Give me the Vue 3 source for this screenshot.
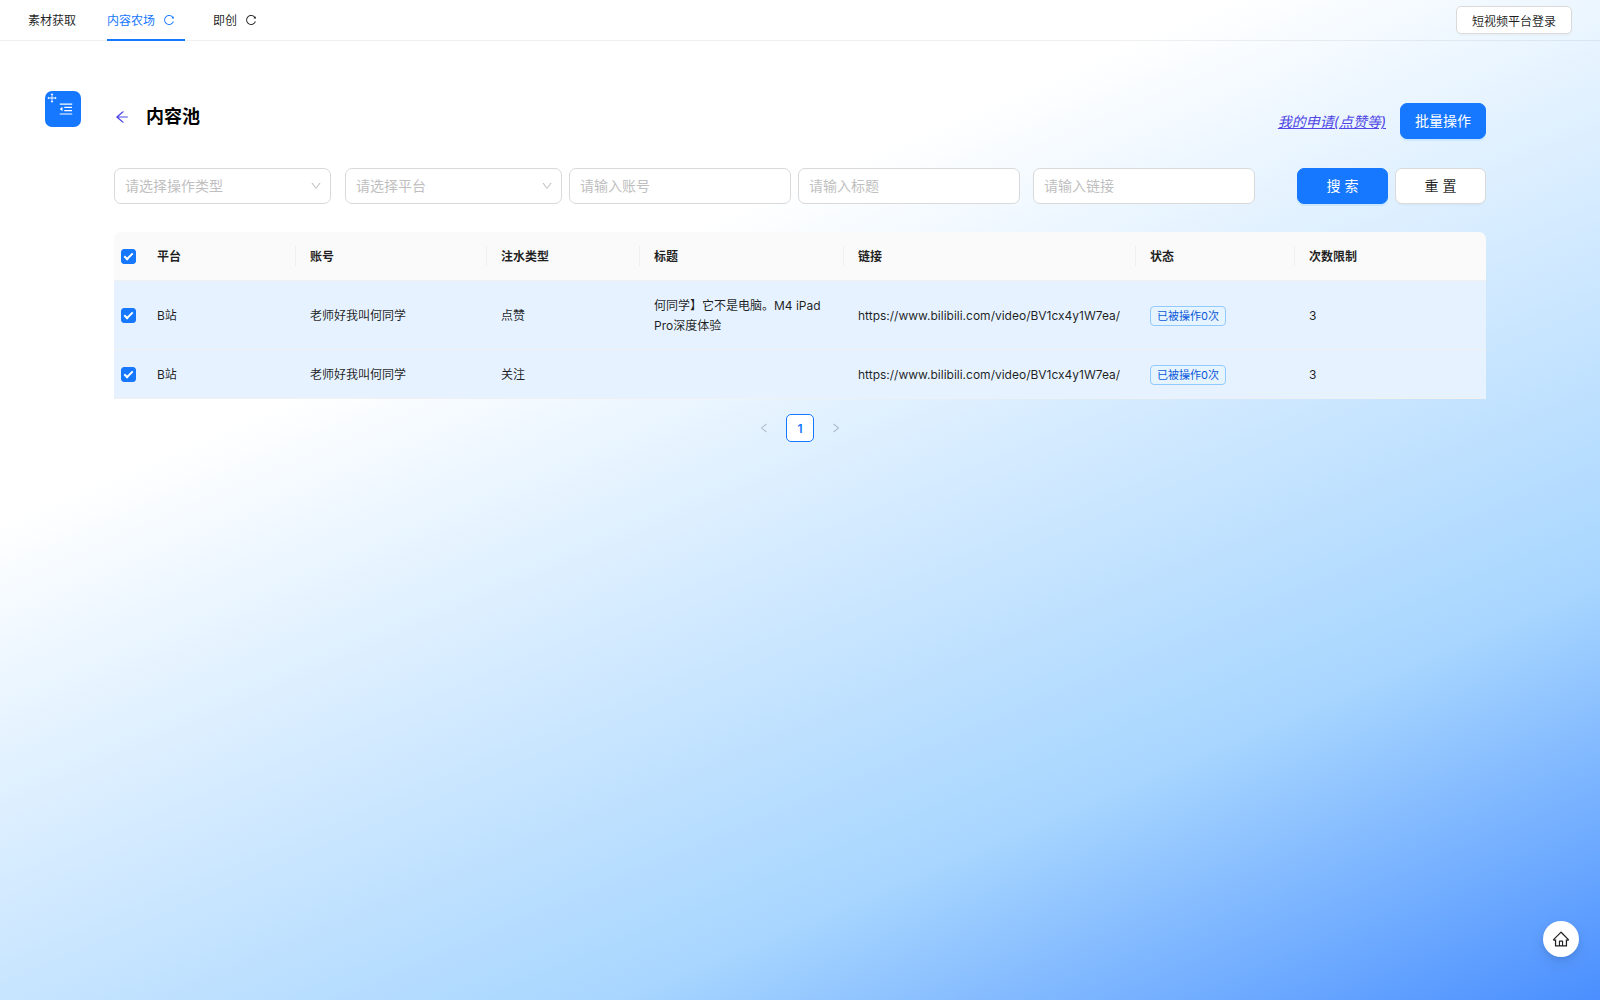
<script setup>
import { computed, ref } from 'vue'

const icons = {
  reload:
    'M909.1 209.3l-56.4 44.1C775.8 155.1 656.2 92 521.9 92 290 92 102.3 279.5 102 511.5 101.7 743.7 289.8 932 521.9 932c181.3 0 335.8-115 394.6-276.1 1.5-4.2-.7-8.9-4.9-10.3l-56.7-19.5a8 8 0 00-10.1 4.8c-1.8 5-3.8 10-5.9 14.9-17.3 41-42.1 77.8-73.7 109.4A344.77 344.77 0 01655.9 829c-42.3 17.9-87.4 27-133.8 27-46.5 0-91.5-9.1-133.8-27A341.5 341.5 0 01279 755.2a342.16 342.16 0 01-73.7-109.4c-17.9-42.4-27-87.4-27-133.9s9.1-91.5 27-133.9c17.3-41 42.1-77.8 73.7-109.4 31.6-31.6 68.4-56.4 109.3-73.8 42.3-17.9 87.4-27 133.8-27 46.5 0 91.5 9.1 133.8 27a341.5 341.5 0 01109.3 73.8c9.9 9.9 19.2 20.4 27.8 31.4l-60.2 47a8 8 0 003 14.1l175.6 43c5 1.2 9.9-2.6 9.9-7.7l.8-180.9c-.1-6.6-7.8-10.3-13-6.2z',
  menuFold:
    'M408 442h480c4.4 0 8-3.6 8-8v-56c0-4.4-3.6-8-8-8H408c-4.4 0-8 3.6-8 8v56c0 4.4 3.6 8 8 8zm-8 204c0 4.4 3.6 8 8 8h480c4.4 0 8-3.6 8-8v-56c0-4.4-3.6-8-8-8H408c-4.4 0-8 3.6-8 8v56zm504-486H120c-4.4 0-8 3.6-8 8v56c0 4.4 3.6 8 8 8h784c4.4 0 8-3.6 8-8v-56c0-4.4-3.6-8-8-8zm0 632H120c-4.4 0-8 3.6-8 8v56c0 4.4 3.6 8 8 8h784c4.4 0 8-3.6 8-8v-56c0-4.4-3.6-8-8-8zM115.4 518.9L271.7 642c5.8 4.6 14.4.5 14.4-6.9V388.9c0-7.4-8.5-11.5-14.4-6.9L115.4 505.1a8.74 8.74 0 000 13.8z',
  drag:
    'M909.3 506.3L781.7 405.6a7.23 7.23 0 00-11.7 5.7V476H548V254h64.8c6 0 9.4-7 5.7-11.7L517.7 114.7a7.14 7.14 0 00-11.3 0L405.6 242.3a7.23 7.23 0 005.7 11.7H476v222H254v-64.8c0-6-7-9.4-11.7-5.7L114.7 506.3a7.14 7.14 0 000 11.3l127.5 100.8c4.7 3.7 11.7.4 11.7-5.7V548h222v222h-64.8c-6 0-9.4 7-5.7 11.7l100.8 127.5c2.9 3.7 8.5 3.7 11.3 0l100.8-127.5c3.7-4.7.4-11.7-5.7-11.7H548V548h222v64.8c0 6 7 9.4 11.7 5.7l127.5-100.8a7.3 7.3 0 00.1-11.4z',
  arrowLeft:
    'M872 474H286.9l350.2-304c5.6-4.9 2.2-14-5.2-14h-88.5c-3.9 0-7.6 1.4-10.5 3.9L155 487.8a31.96 31.96 0 000 48.3L535.1 866c1.5 1.3 3.3 2 5.2 2h91.5c7.4 0 10.8-9.2 5.2-14L286.9 550H872c4.4 0 8-3.6 8-8v-60c0-4.4-3.6-8-8-8z',
  down:
    'M884 256h-75c-5.1 0-9.9 2.5-12.9 6.6L512 654.2 227.9 262.6c-3-4.1-7.8-6.6-12.9-6.6h-75c-6.5 0-10.3 7.4-6.5 12.7l352.6 486.1c12.8 17.6 39 17.6 51.7 0l352.6-486.1c3.9-5.3.1-12.7-6.4-12.7z',
  left:
    'M724 218.3V141c0-6.7-7.7-10.4-12.9-6.3L260.3 486.8a31.86 31.86 0 000 50.3l450.8 352.1c5.3 4.1 12.9.4 12.9-6.3v-77.3c0-4.9-2.3-9.6-6.1-12.6l-360-281 360-281.1c3.8-3 6.1-7.7 6.1-12.6z',
  right:
    'M765.7 486.8L314.9 134.7A7.97 7.97 0 00302 141v77.3c0 4.9 2.3 9.6 6.1 12.6l360 281.1-360 281.1c-3.9 3-6.1 7.7-6.1 12.6V883c0 6.7 7.7 10.4 12.9 6.3l450.8-352.1a31.96 31.96 0 000-50.4z',
  home:
    'M946.5 505L560.1 118.8l-25.9-25.9a31.5 31.5 0 00-44.4 0L77.5 505a63.9 63.9 0 00-18.8 46c.4 35.2 29.7 63.3 64.9 63.3h42.5V940h691.8V614.3h43.4c17.1 0 33.2-6.7 45.3-18.8a63.6 63.6 0 0018.7-45.3c0-17-6.7-33.1-18.8-45.2zM568 868H456V664h112v204zm217.9-325.7V868H632V640c0-22.1-17.9-40-40-40H432c-22.1 0-40 17.9-40 40v228H238.1V542.3h-96l370-369.7 23.1 23.1L882 542.3h-96.1z'
}

const tabs = [
  { label: '素材获取', reload: false },
  { label: '内容农场', reload: true },
  { label: '即创', reload: true }
]
const activeTab = ref('内容农场')

const columns = [
  { title: '平台', width: 153 },
  { title: '账号', width: 191 },
  { title: '注水类型', width: 153 },
  { title: '标题', width: 204 },
  { title: '链接', width: 292 },
  { title: '状态', width: 159 },
  { title: '次数限制', width: 191 }
]
const checkColumn = 29
const totalWidth = checkColumn + columns.reduce((sum, c) => sum + c.width, 0)
const share = (width) => ({ width: `${(width / totalWidth) * 100}%` })

const rows = ref([
  {
    id: 1,
    checked: true,
    platform: 'B站',
    account: '老师好我叫何同学',
    type: '点赞',
    title: '何同学】它不是电脑。M4 iPad Pro深度体验',
    link: 'https://www.bilibili.com/video/BV1cx4y1W7ea/',
    status: '已被操作0次',
    limit: 3
  },
  {
    id: 2,
    checked: true,
    platform: 'B站',
    account: '老师好我叫何同学',
    type: '关注',
    title: '',
    link: 'https://www.bilibili.com/video/BV1cx4y1W7ea/',
    status: '已被操作0次',
    limit: 3
  }
])

const allChecked = computed({
  get: () => rows.value.every((row) => row.checked),
  set: (value) => rows.value.forEach((row) => (row.checked = value))
})

const blank = () => ({ operation: '', platform: '', account: '', title: '', link: '' })
const filters = ref(blank())
const reset = () => (filters.value = blank())
</script>

<template>
  <div class="page">
    <header class="topbar">
      <nav class="tabs">
        <a
          v-for="tab in tabs"
          :key="tab.label"
          href="#"
          class="tab"
          :class="{ active: tab.label === activeTab }"
          @click.prevent="activeTab = tab.label"
        >
          <span>{{ tab.label }}</span>
          <svg v-if="tab.reload" class="icon reload" viewBox="0 0 1024 1024"><path :d="icons.reload" /></svg>
        </a>
      </nav>
      <button type="button" class="btn login">短视频平台登录</button>
    </header>

    <button type="button" class="menu-toggle" aria-label="展开菜单">
      <svg class="icon drag" viewBox="0 0 1024 1024"><path :d="icons.drag" /></svg>
      <svg class="icon fold" viewBox="0 0 1024 1024"><path :d="icons.menuFold" /></svg>
    </button>

    <main class="content">
      <div class="heading">
        <a href="#" class="back" aria-label="返回">
          <svg class="icon arrow" viewBox="0 0 1024 1024"><path :d="icons.arrowLeft" /></svg>
        </a>
        <h1>内容池</h1>
        <div class="actions">
          <a href="#" class="applications">我的申请(点赞等)</a>
          <button type="button" class="btn primary batch">批量操作</button>
        </div>
      </div>

      <form class="filters" @submit.prevent>
        <div class="selects">
          <div class="cell">
            <select v-model="filters.operation" class="field" aria-label="操作类型">
              <option value="">请选择操作类型</option>
              <option value="like">点赞</option>
              <option value="follow">关注</option>
            </select>
            <svg class="icon caret" viewBox="0 0 1024 1024"><path :d="icons.down" /></svg>
          </div>
          <div class="cell">
            <select v-model="filters.platform" class="field" aria-label="平台">
              <option value="">请选择平台</option>
              <option value="bilibili">B站</option>
            </select>
            <svg class="icon caret" viewBox="0 0 1024 1024"><path :d="icons.down" /></svg>
          </div>
        </div>
        <div class="inputs">
          <div class="cell">
            <input v-model="filters.account" class="field" type="text" placeholder="请输入账号" aria-label="账号" />
          </div>
          <div class="cell">
            <input v-model="filters.title" class="field" type="text" placeholder="请输入标题" aria-label="标题" />
          </div>
        </div>
        <div class="link-input">
          <input v-model="filters.link" class="field" type="text" placeholder="请输入链接" aria-label="链接" />
        </div>
        <div class="submit">
          <button type="submit" class="btn primary">搜 索</button>
          <button type="button" class="btn" @click="reset">重 置</button>
        </div>
      </form>

      <table class="data">
        <colgroup>
          <col :style="share(checkColumn)" />
          <col v-for="column in columns" :key="column.title" :style="share(column.width)" />
        </colgroup>
        <thead>
          <tr>
            <th class="check"><input v-model="allChecked" type="checkbox" aria-label="全选" /></th>
            <th v-for="column in columns" :key="column.title" scope="col">{{ column.title }}</th>
          </tr>
        </thead>
        <tbody>
          <tr v-for="row in rows" :key="row.id" :class="{ selected: row.checked }">
            <td class="check"><input v-model="row.checked" type="checkbox" :aria-label="`选择第${row.id}行`" /></td>
            <td>{{ row.platform }}</td>
            <td>{{ row.account }}</td>
            <td>{{ row.type }}</td>
            <td>{{ row.title }}</td>
            <td>{{ row.link }}</td>
            <td><span class="tag">{{ row.status }}</span></td>
            <td>{{ row.limit }}</td>
          </tr>
        </tbody>
      </table>

      <nav class="pagination" aria-label="分页">
        <button type="button" class="step" disabled aria-label="上一页">
          <svg class="icon" viewBox="0 0 1024 1024"><path :d="icons.left" /></svg>
        </button>
        <button type="button" class="current">1</button>
        <button type="button" class="step" disabled aria-label="下一页">
          <svg class="icon" viewBox="0 0 1024 1024"><path :d="icons.right" /></svg>
        </button>
      </nav>
    </main>

    <button type="button" class="home" aria-label="首页">
      <svg class="icon" viewBox="0 0 1024 1024"><path :d="icons.home" /></svg>
    </button>
  </div>
</template>

<style>
body {
  margin: 0;
}
</style>

<style scoped>
.page {
  box-sizing: border-box;
  min-height: 100vh;
  background: linear-gradient(157deg, #fff 31%, #a8d6ff 75%, #4a8fff 100%);
  color: rgba(0, 0, 0, 0.88);
  font-family: Inter, "Noto Sans CJK SC", sans-serif;
  font-size: 14px;
}

.page *,
.page *::before {
  box-sizing: border-box;
}

.icon {
  display: block;
  flex: none;
  width: 12px;
  height: 12px;
  fill: currentColor;
}

button,
input,
select {
  margin: 0;
  font-family: inherit;
}

button {
  cursor: pointer;
}

.topbar {
  display: flex;
  align-items: center;
  justify-content: space-between;
  height: 41px;
  padding: 0 28px;
  border-bottom: 1px solid rgba(5, 5, 5, 0.06);
}

.tabs {
  display: flex;
  align-self: stretch;
  gap: 28px;
  margin-bottom: -1px;
}

.tab {
  display: flex;
  align-items: center;
  gap: 8px;
  min-width: 51px;
  border-bottom: 2px solid transparent;
  color: rgba(0, 0, 0, 0.88);
  font-size: 12px;
  text-decoration: none;
}

.tab.active {
  border-bottom-color: #1677ff;
  color: #1677ff;
}

.reload {
  margin-right: 10px;
}

.btn {
  display: flex;
  align-items: center;
  justify-content: center;
  height: 36px;
  padding: 0 14px 2px;
  border: 1px solid #d9d9d9;
  border-radius: 7px;
  background: #fff;
  box-shadow: 0 2px 0 rgba(0, 0, 0, 0.02);
  color: rgba(0, 0, 0, 0.88);
  font-size: 14px;
}

.btn.primary {
  border-color: #1677ff;
  background: #1677ff;
  box-shadow: 0 2px 0 rgba(5, 145, 255, 0.1);
  color: #fff;
}

.btn.login {
  height: 28px;
  padding: 0 15px;
  border-radius: 5px;
  font-size: 12px;
}

.menu-toggle {
  position: absolute;
  top: 91px;
  left: 45px;
  display: flex;
  align-items: center;
  justify-content: center;
  width: 36px;
  height: 36px;
  padding: 0 0 0 6px;
  border: 0;
  border-radius: 7px;
  background: #1677ff;
  color: #fff;
}

.drag {
  position: absolute;
  top: 1px;
  left: 1px;
}

.fold {
  width: 16px;
  height: 16px;
}

.content {
  padding: 62px 114px 40px;
}

.heading {
  display: flex;
  align-items: flex-start;
}

.back {
  padding: 6px 0;
  color: #4f46e5;
}

.arrow {
  width: 16px;
  height: 16px;
}

h1 {
  margin: 0 0 0 16px;
  color: #000;
  font-size: 18px;
  font-weight: 600;
  line-height: 28px;
}

.actions {
  display: flex;
  align-items: center;
  gap: 14px;
  margin-left: auto;
}

.applications {
  color: #4f46e5;
  font-style: italic;
  text-decoration: underline;
}

.filters {
  display: flex;
  margin-top: 29px;
}

.selects {
  display: flex;
  flex: 448 1 0;
  gap: 14px;
}

.cell {
  position: relative;
  flex: 1 1 0;
}

.caret {
  position: absolute;
  top: 12px;
  right: 9px;
  color: #bfbfbf;
  pointer-events: none;
}

.inputs {
  display: flex;
  flex: 451 1 0;
  gap: 7px;
  margin: 0 13px 0 7px;
}

.field {
  display: block;
  width: 100%;
  height: 36px;
  padding: 0 10px 2px;
  border: 1px solid #d9d9d9;
  border-radius: 7px;
  outline: 0;
  background: #fff;
  color: rgba(0, 0, 0, 0.88);
  font-size: 14px;
  appearance: none;
}

select.field {
  color: #bfbfbf;
}

.field::placeholder {
  color: #bfbfbf;
  opacity: 1;
}

.link-input {
  flex: 222 1 0;
}

.submit {
  display: flex;
  flex: none;
  gap: 7px;
  margin-left: 42px;
}

.submit .btn {
  width: 91px;
}

.data {
  width: 100%;
  margin-top: 28px;
  border-spacing: 0;
  border-collapse: separate;
  font-size: 12px;
  line-height: 20px;
  table-layout: fixed;
}

th,
td {
  height: 49px;
  padding: 15px 14px 13px;
  border-bottom: 1px solid #f0f0f0;
  text-align: left;
  vertical-align: middle;
}

th {
  position: relative;
  background: #fafafa;
  font-weight: 600;
}

th:first-child {
  border-top-left-radius: 7px;
}

th:last-child {
  border-top-right-radius: 7px;
}

th:not(.check):not(:last-child)::before {
  position: absolute;
  top: 14px;
  right: 0;
  width: 1px;
  height: 20px;
  background: #f0f0f0;
  content: "";
}

td {
  overflow-wrap: break-word;
}

.selected td {
  background: #e6f2ff;
}

th.check,
td.check {
  padding: 0 7px;
}

.check input {
  display: block;
  width: 15px;
  height: 15px;
  border: 1px solid #d9d9d9;
  border-radius: 3px;
  background: #fff;
  appearance: none;
}

.check input:checked {
  position: relative;
  border-color: #1677ff;
  background: #1677ff;
}

.check input:checked::before {
  position: absolute;
  top: 1px;
  left: 4px;
  width: 5px;
  height: 9px;
  border: solid #fff;
  border-width: 0 2px 2px 0;
  content: "";
  transform: rotate(45deg);
}

.tag {
  display: block;
  width: fit-content;
  padding: 0 6px;
  border: 1px solid #91caff;
  border-radius: 4px;
  background: #e6f4ff;
  color: #0958d9;
  font-size: 11px;
  line-height: 18px;
  white-space: nowrap;
}

.pagination {
  display: flex;
  justify-content: center;
  gap: 8px;
  margin-top: 15px;
}

.pagination button {
  display: flex;
  align-items: center;
  justify-content: center;
  width: 28px;
  height: 28px;
  padding: 0;
  border: 1px solid transparent;
  border-radius: 5px;
  background: transparent;
}

.pagination .step {
  color: rgba(0, 0, 0, 0.25);
}

.pagination .current {
  border-color: #1677ff;
  background: #fff;
  color: #1677ff;
  font-size: 12px;
  font-weight: 600;
}

.home {
  position: fixed;
  right: 21px;
  bottom: 43px;
  display: flex;
  align-items: center;
  justify-content: center;
  width: 36px;
  height: 36px;
  padding: 0;
  border: 0;
  border-radius: 50%;
  background: #fff;
  box-shadow: 0 6px 16px rgba(0, 0, 0, 0.08), 0 3px 6px rgba(0, 0, 0, 0.08);
  color: rgba(0, 0, 0, 0.88);
}

.home .icon {
  width: 18px;
  height: 18px;
}
</style>
